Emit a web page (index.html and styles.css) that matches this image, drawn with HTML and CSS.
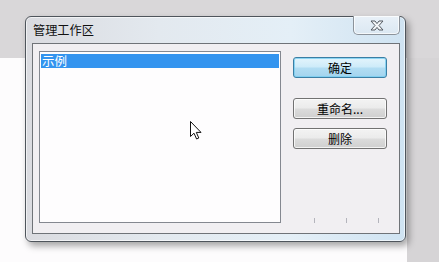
FILE: index.html
```html
<!DOCTYPE html>
<html lang="zh-CN">
<head>
<meta charset="utf-8">
<title>管理工作区</title>
<link rel="stylesheet" href="styles.css">
</head>
<body>
<div class="dialog">
  <div class="titlebar">
    <span class="title">管理工作区</span>
    <div class="close">
      <svg width="16" height="11" viewBox="0 0 16 11">
        <path d="M2 1 L6 1 L8 3.6 L10 1 L14 1 L10 5.5 L14 10 L10 10 L8 7.4 L6 10 L2 10 L6 5.5 Z" fill="#f4f6f8" stroke="#555b62" stroke-width="1" stroke-linejoin="round"/>
      </svg>
    </div>
  </div>
  <div class="client">
    <div class="listbox">
      <div class="item selected">示例</div>
    </div>
    <div class="buttons">
      <button class="btn default">确定</button>
      <button class="btn gap">重命名...</button>
      <button class="btn">删除</button>
    </div>
    <div class="ticks">
      <i></i><i></i><i></i>
    </div>
  </div>
</div>
<svg class="cursor" width="13" height="19" viewBox="0 0 13 19">
  <path d="M0.5 0.5 L0.5 15.5 L4 12.2 L6.6 18 L8.8 17 L6.3 11.4 L11 11.4 Z" fill="#ffffff" stroke="#111" stroke-width="1" stroke-linejoin="miter"/>
</svg>
</body>
</html>
```

FILE: styles.css
```css
html, body {
  margin: 0;
  padding: 0;
}

body {
  width: 439px;
  height: 262px;
  overflow: hidden;
  position: relative;
  font-family: "Noto Sans CJK SC", "Noto Sans", sans-serif;
  font-size: 12px;
  color: #000;
  /* window behind: grey top band and grey strip on the right */
  background:
    linear-gradient(#d9d7d9, #d9d7d9) 0 0 / 100% 58px no-repeat,
    linear-gradient(#d6d4d6, #d6d4d6) 407px 0 / 32px 100% no-repeat,
    #fdfcfd;
  padding-top: 16px;
  padding-left: 25px;
  box-sizing: border-box;
}

.dialog {
  position: relative;
  width: 381px;
  height: 226px;
  box-sizing: border-box;
  border: 1px solid #4f555c;
  border-radius: 6px;
  background: linear-gradient(90deg, #dadbe0 0%, #e3e9ef 35%, #e4eff7 70%, #cfe3f2 100%);
  box-shadow: 3px 4px 7px rgba(0, 0, 0, 0.35), inset 0 0 0 1px rgba(255, 255, 255, 0.6);
  padding: 0 5px 7px 6px;
  display: flex;
  flex-direction: column;
}

.titlebar {
  height: 26px;
  display: flex;
  align-items: center;
  padding-left: 1px;
}

.title {
  font-size: 12.2px;
  color: #111;
  letter-spacing: 0;
}

.close {
  position: absolute;
  top: -1px;
  right: 5px;
  width: 47px;
  height: 19px;
  box-sizing: border-box;
  border: 1px solid #8c939b;
  border-top: none;
  border-radius: 0 0 5px 5px;
  background: linear-gradient(#e9f1f8, #dbe8f2);
  box-shadow: inset 0 0 0 1px rgba(255, 255, 255, 0.7);
  display: flex;
  align-items: center;
  justify-content: center;
}

.client {
  position: relative;
  flex: 1;
  border: 1px solid #6f7378;
  background: #f1eff2;
  display: flex;
  align-items: flex-start;
  padding: 7px 0 0 6px;
}

.listbox {
  width: 242px;
  height: 172px;
  box-sizing: border-box;
  border: 1px solid #848890;
  background: #fefdfe;
  padding: 2px 1px;
}

.item {
  height: 14px;
  line-height: 14px;
  font-size: 12.5px;
  padding-left: 1px;
}

.item.selected {
  background: #3394ef;
  color: #fff;
}

.buttons {
  display: flex;
  flex-direction: column;
  margin-left: 12px;
  margin-top: 6px;
  gap: 9px;
}

.btn {
  width: 94px;
  height: 21px;
  box-sizing: border-box;
  border: 1px solid #727272;
  border-radius: 3px;
  font-family: "Noto Sans CJK SC", "Noto Sans", sans-serif;
  font-size: 12px;
  line-height: 17px;
  padding: 0;
  color: #000;
  background: linear-gradient(#f3f3f3 0%, #ebebeb 48%, #dcdcdc 52%, #cfcfcf 100%);
  box-shadow: inset 0 0 0 1px rgba(255, 255, 255, 0.75);
}

.btn.default {
  border-color: #3b7ea4;
  background: linear-gradient(#e3f4fc 0%, #cdebf9 48%, #b2ddf3 52%, #a3d4ee 100%);
  box-shadow: inset 0 0 0 1px rgba(120, 205, 240, 0.8);
}

.btn.gap {
  margin-top: 11px;
}

.ticks {
  position: absolute;
  left: 281px;
  bottom: 10px;
  display: flex;
  gap: 31px;
}

.ticks i {
  display: block;
  width: 1px;
  height: 5px;
  background: #b4b4bc;
}

.cursor {
  position: absolute;
  left: 190px;
  top: 121px;
}
```
